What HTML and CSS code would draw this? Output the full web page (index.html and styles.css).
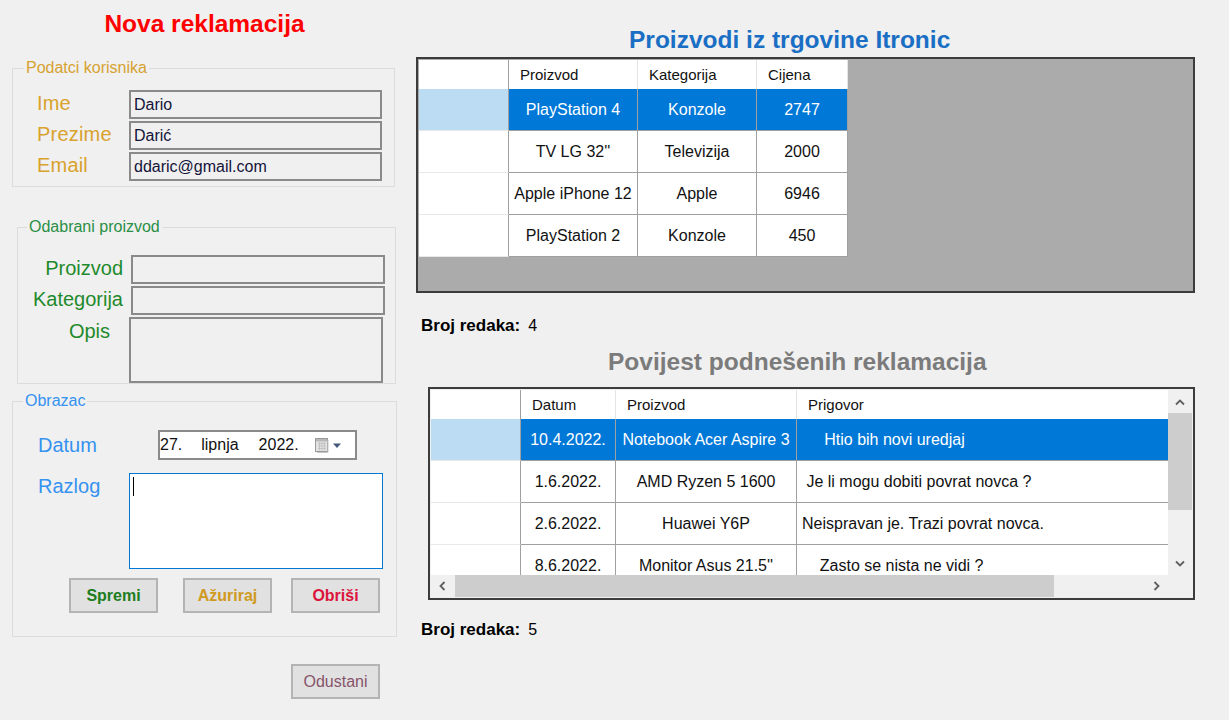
FILE: index.html
```html
<!DOCTYPE html>
<html lang="hr">
<head>
<meta charset="utf-8">
<title>Nova reklamacija</title>
<link rel="stylesheet" href="styles.css">
</head>
<body>
<div class="app">
  <div class="left">
    <h1 class="title-red">Nova reklamacija</h1>

    <fieldset class="group g-user">
      <legend>Podatci korisnika</legend>
      <div class="frow"><span class="lbl">Ime</span><div class="tb">Dario</div></div>
      <div class="frow"><span class="lbl">Prezime</span><div class="tb">Darić</div></div>
      <div class="frow"><span class="lbl">Email</span><div class="tb">ddaric@gmail.com</div></div>
    </fieldset>

    <fieldset class="group g-prod">
      <legend>Odabrani proizvod</legend>
      <div class="frow"><span class="lbl">Proizvod</span><div class="tb tb-wide"></div></div>
      <div class="frow"><span class="lbl">Kategorija</span><div class="tb tb-wide"></div></div>
      <div class="frow frow-opis"><span class="lbl lbl-opis">Opis</span><div class="tb tb-opis"></div></div>
    </fieldset>

    <fieldset class="group g-form">
      <legend>Obrazac</legend>
      <div class="frow frow-datum">
        <span class="lbl">Datum</span>
        <div class="datepicker">
          <span class="dp-day">27.</span><span class="dp-month">lipnja</span><span class="dp-year">2022.</span>
          <svg class="dp-icon" width="30" height="16" viewBox="0 0 30 16">
            <rect x="1.5" y="1.5" width="12" height="13" fill="#e4e4e4" stroke="#9a9a9a"/>
            <rect x="2" y="2" width="11" height="2.5" fill="#b8b8b8"/>
            <path d="M4 6.5h8M4 9h8M4 11.5h8M5.5 5v8.5M8 5v8.5M10.5 5v8.5" stroke="#c4c4c4" stroke-width="1"/>
            <path d="M14 3v12.5H3" stroke="#c8c8c8" stroke-width="1" fill="none"/>
            <path d="M19 6.5h8l-4 4.5z" fill="#44597a"/>
          </svg>
        </div>
      </div>
      <div class="frow frow-razlog">
        <span class="lbl lbl-razlog">Razlog</span>
        <div class="textarea"><span class="caret"></span></div>
      </div>
      <div class="btnrow">
        <button class="btn btn-spremi">Spremi</button>
        <button class="btn btn-azuriraj">Ažuriraj</button>
        <button class="btn btn-obrisi">Obriši</button>
      </div>
    </fieldset>

    <button class="btn btn-odustani">Odustani</button>
  </div>

  <div class="right">
    <h2 class="title-blue">Proizvodi iz trgovine Itronic</h2>
    <div class="grid1">
      <div class="table t1">
        <div class="corner"></div>
        <div class="ch">Proizvod</div>
        <div class="ch">Kategorija</div>
        <div class="ch">Cijena</div>

        <div class="rh sel"></div>
        <div class="cell sel">PlayStation 4</div>
        <div class="cell sel">Konzole</div>
        <div class="cell sel">2747</div>

        <div class="rh"></div>
        <div class="cell">TV LG 32''</div>
        <div class="cell">Televizija</div>
        <div class="cell">2000</div>

        <div class="rh"></div>
        <div class="cell">Apple iPhone 12</div>
        <div class="cell">Apple</div>
        <div class="cell">6946</div>

        <div class="rh"></div>
        <div class="cell">PlayStation 2</div>
        <div class="cell">Konzole</div>
        <div class="cell">450</div>
      </div>
    </div>
    <div class="count"><b>Broj redaka:</b><span class="num">4</span></div>

    <h2 class="title-gray">Povijest podnešenih reklamacija</h2>
    <div class="grid2">
      <div class="viewport">
        <div class="table t2">
          <div class="corner"></div>
          <div class="ch">Datum</div>
          <div class="ch">Proizvod</div>
          <div class="ch">Prigovor</div>

          <div class="rh sel"></div>
          <div class="cell sel">10.4.2022.</div>
          <div class="cell sel">Notebook Acer Aspire 3</div>
          <div class="cell sel txt">     Htio bih novi uredjaj</div>

          <div class="rh"></div>
          <div class="cell">1.6.2022.</div>
          <div class="cell">AMD Ryzen 5 1600</div>
          <div class="cell txt"> Je li mogu dobiti povrat novca ?</div>

          <div class="rh"></div>
          <div class="cell">2.6.2022.</div>
          <div class="cell">Huawei Y6P</div>
          <div class="cell txt">Neispravan je. Trazi povrat novca.</div>

          <div class="rh"></div>
          <div class="cell">8.6.2022.</div>
          <div class="cell">Monitor Asus 21.5''</div>
          <div class="cell txt">    Zasto se nista ne vidi ?</div>
        </div>
      </div>
      <div class="vscroll">
        <div class="sb-btn">
          <svg width="10" height="8" viewBox="0 0 10 8"><polyline points="1,6.5 5,2.5 9,6.5" fill="none" stroke="#606060" stroke-width="1.8"/></svg>
        </div>
        <div class="vthumb"></div>
        <div class="sb-fill"></div>
        <div class="sb-btn">
          <svg width="10" height="8" viewBox="0 0 10 8"><polyline points="1,1.5 5,5.5 9,1.5" fill="none" stroke="#606060" stroke-width="1.8"/></svg>
        </div>
      </div>
      <div class="hscroll">
        <div class="sb-btn">
          <svg width="8" height="10" viewBox="0 0 8 10"><polyline points="6.5,1 2.5,5 6.5,9" fill="none" stroke="#606060" stroke-width="1.8"/></svg>
        </div>
        <div class="hthumb"></div>
        <div class="sb-fill"></div>
        <div class="sb-btn">
          <svg width="8" height="10" viewBox="0 0 8 10"><polyline points="1.5,1 5.5,5 1.5,9" fill="none" stroke="#606060" stroke-width="1.8"/></svg>
        </div>
      </div>
      <div class="sb-corner"></div>
    </div>
    <div class="count count2"><b>Broj redaka:</b><span class="num">5</span></div>
  </div>
</div>
</body>
</html>
```

FILE: styles.css
```css
* { box-sizing: border-box; }

html, body {
  margin: 0;
  padding: 0;
}

body {
  width: 1229px;
  height: 720px;
  overflow: hidden;
  background: #f0f0f0;
  color: #000;
  font-family: "Liberation Sans", Arial, sans-serif;
}

.app {
  display: flex;
  align-items: flex-start;
}

/* ---------- left column ---------- */
.left {
  width: 385px;
  margin-left: 12px;
  display: flex;
  flex-direction: column;
  align-items: flex-start;
}

.title-red {
  margin: 10px 0 0;
  width: 100%;
  text-align: center;
  font-size: 24.5px;
  line-height: 28px;
  font-weight: bold;
  color: #ff0000;
}

.group {
  margin: 0;
  padding: 0;
  border: 1px solid #dcdcdc;
  min-width: 0;
}

.group legend {
  padding: 0 2px;
  font-size: 16px;
  line-height: 18px;
}

.frow {
  display: flex;
  align-items: center;
  height: 29px;
}

.frow + .frow { margin-top: 2px; }

.lbl {
  font-size: 20px;
  line-height: 24px;
  flex: none;
}

.tb {
  height: 29px;
  width: 253px;
  border: 2px solid #8a8a8a;
  background: #f0f0f0;
  font-size: 16px;
  line-height: 25px;
  padding-left: 3px;
  color: #14143a;
  white-space: nowrap;
}

/* user group */
.g-user {
  width: 383px;
  margin-top: 21px;
  padding: 13px 0 5px;
}
.g-user legend { margin-left: 11px; color: #d6a232; }
.g-user .frow { padding-left: 24px; }
.g-user .lbl {
  width: 92px;
  margin-bottom: 4px;
  color: #d9a22c;
  letter-spacing: 0.2px;
}

/* product group */
.g-prod {
  width: 379px;
  margin-top: 31px;
  margin-left: 5px;
  padding: 19px 0 0;
}
.g-prod legend { margin-left: 9px; color: #2a8f45; }
.g-prod .lbl {
  width: 113px;
  text-align: right;
  padding-right: 8px;
  margin-bottom: 4px;
  color: #1f8a2c;
}
.g-prod .tb-wide { width: 254px; }
.g-prod .frow-opis {
  height: 66px;
  align-items: flex-start;
}
.g-prod .lbl-opis {
  width: 111px;
  padding-right: 19px;
  margin-top: 2px;
  margin-bottom: 0;
}
.tb-opis {
  width: 254px;
  height: 66px;
}

/* form group */
.g-form {
  width: 385px;
  margin-top: 8px;
  padding: 20px 0 23px;
}
.g-form legend { margin-left: 10px; color: #3592f0; }
.g-form .lbl { color: #3592f0; }

.frow-datum {
  height: 30px;
  padding-left: 25px;
}
.frow-datum .lbl { width: 120px; }

.datepicker {
  width: 199px;
  height: 30px;
  border: 2px solid #8a8a8a;
  background: #fff;
  display: flex;
  align-items: center;
  font-size: 16px;
  padding-left: 0;
  color: #111;
}
.dp-day { margin-left: 0; }
.dp-month { margin-left: 19px; }
.dp-year { margin-left: 20px; }
.dp-icon { margin-left: 15px; }

.frow-razlog {
  height: 96px;
  margin-top: 13px !important;
  padding-left: 25px;
  align-items: flex-start;
}
.lbl-razlog { width: 91px; margin-top: 1px; }

.textarea {
  width: 254px;
  height: 96px;
  border: 1px solid #0078d7;
  background: #fff;
  padding: 3px 0 0 3px;
}
.caret {
  display: block;
  width: 1px;
  height: 19px;
  background: #000;
}

.btnrow {
  display: flex;
  margin-top: 9px;
  padding-left: 56px;
}

.btn {
  width: 89px;
  height: 35px;
  border: 2px solid #b4b4b4;
  background: #e1e1e1;
  font-family: "Liberation Sans", Arial, sans-serif;
  font-size: 16px;
  padding: 0;
  margin: 0;
}
.btn-spremi { font-weight: bold; color: #1d7d1d; }
.btn-azuriraj { font-weight: bold; color: #d09a20; margin-left: 25px; }
.btn-obrisi { font-weight: bold; color: #dc143c; margin-left: 19px; }
.btn-odustani {
  margin-top: 27px;
  margin-left: 279px;
  color: #86546a;
}

/* ---------- right column ---------- */
.right {
  width: 779px;
  margin-left: 19px;
  display: flex;
  flex-direction: column;
  align-items: flex-start;
}

.title-blue,
.title-gray {
  margin: 0;
  font-size: 24.5px;
  line-height: 28px;
  font-weight: bold;
  white-space: nowrap;
}
.title-blue {
  margin-top: 26px;
  padding-left: 213px;
  color: #1a6fc4;
}
.title-gray {
  margin-top: 12px;
  padding-left: 192px;
  color: #7b7b7b;
}

.grid1 {
  margin-top: 3px;
  width: 779px;
  height: 236px;
  border: 2px solid #3c3c3c;
  background: #ababab;
  padding: 1px;
}

.table {
  display: grid;
  font-size: 16px;
}
.t1 {
  grid-template-columns: 90px 129px 119px 91px;
  grid-template-rows: 29px repeat(4, 42px);
  width: 429px;
}
.t2 {
  grid-template-columns: 90px 95px 181px 460px;
  grid-template-rows: 29px repeat(4, 42px);
  width: 826px;
}

.corner {
  background: #fff;
  border-right: 1px solid #a0a0a0;
}
.ch {
  background: #fff;
  border-right: 1px solid #e4e4e4;
  font-size: 15px;
  padding-left: 11px;
  display: flex;
  align-items: center;
  color: #111;
}
.rh {
  background: #fff;
  border-right: 1px solid #a0a0a0;
  border-bottom: 1px solid #e8e8e8;
}
.rh.sel { background: #bcdcf4; }

.cell {
  background: #fff;
  border-right: 1px solid #a0a0a0;
  border-bottom: 1px solid #a0a0a0;
  display: flex;
  align-items: center;
  justify-content: center;
  white-space: nowrap;
  color: #111;
}
.cell.sel {
  background: #0078d7;
  color: #fff;
}
.cell.txt {
  justify-content: flex-start;
  padding-left: 5px;
  white-space: pre;
}

.count {
  margin-top: 23px;
  padding-left: 5px;
  font-size: 17px;
  line-height: 20px;
}
.count b { font-weight: bold; }
.count .num { margin-left: 8px; font-size: 16px; }
.count2 { margin-top: 20px; }

.grid2 {
  margin-top: 11px;
  margin-left: 12px;
  width: 767px;
  height: 213px;
  border: 2px solid #3c3c3c;
  background: #f0f0f0;
  padding: 1px 0 0 1px;
  display: grid;
  grid-template-columns: 737px 24px;
  grid-template-rows: 185px 22px;
}

.viewport {
  overflow: hidden;
  background: #fff;
}

.vscroll {
  display: flex;
  flex-direction: column;
  background: #f0f0f0;
}
.vscroll .sb-btn {
  height: 23px;
  display: flex;
  align-items: center;
  justify-content: center;
}
.vthumb {
  height: 97px;
  background: #cdcdcd;
}
.sb-fill { flex: 1; }

.hscroll {
  display: flex;
  background: #f0f0f0;
}
.hscroll .sb-btn {
  width: 22px;
  display: flex;
  align-items: center;
  justify-content: center;
}
.hthumb {
  width: 599px;
  margin-left: 2px;
  background: #cdcdcd;
}
.sb-corner { background: #f0f0f0; }
```
